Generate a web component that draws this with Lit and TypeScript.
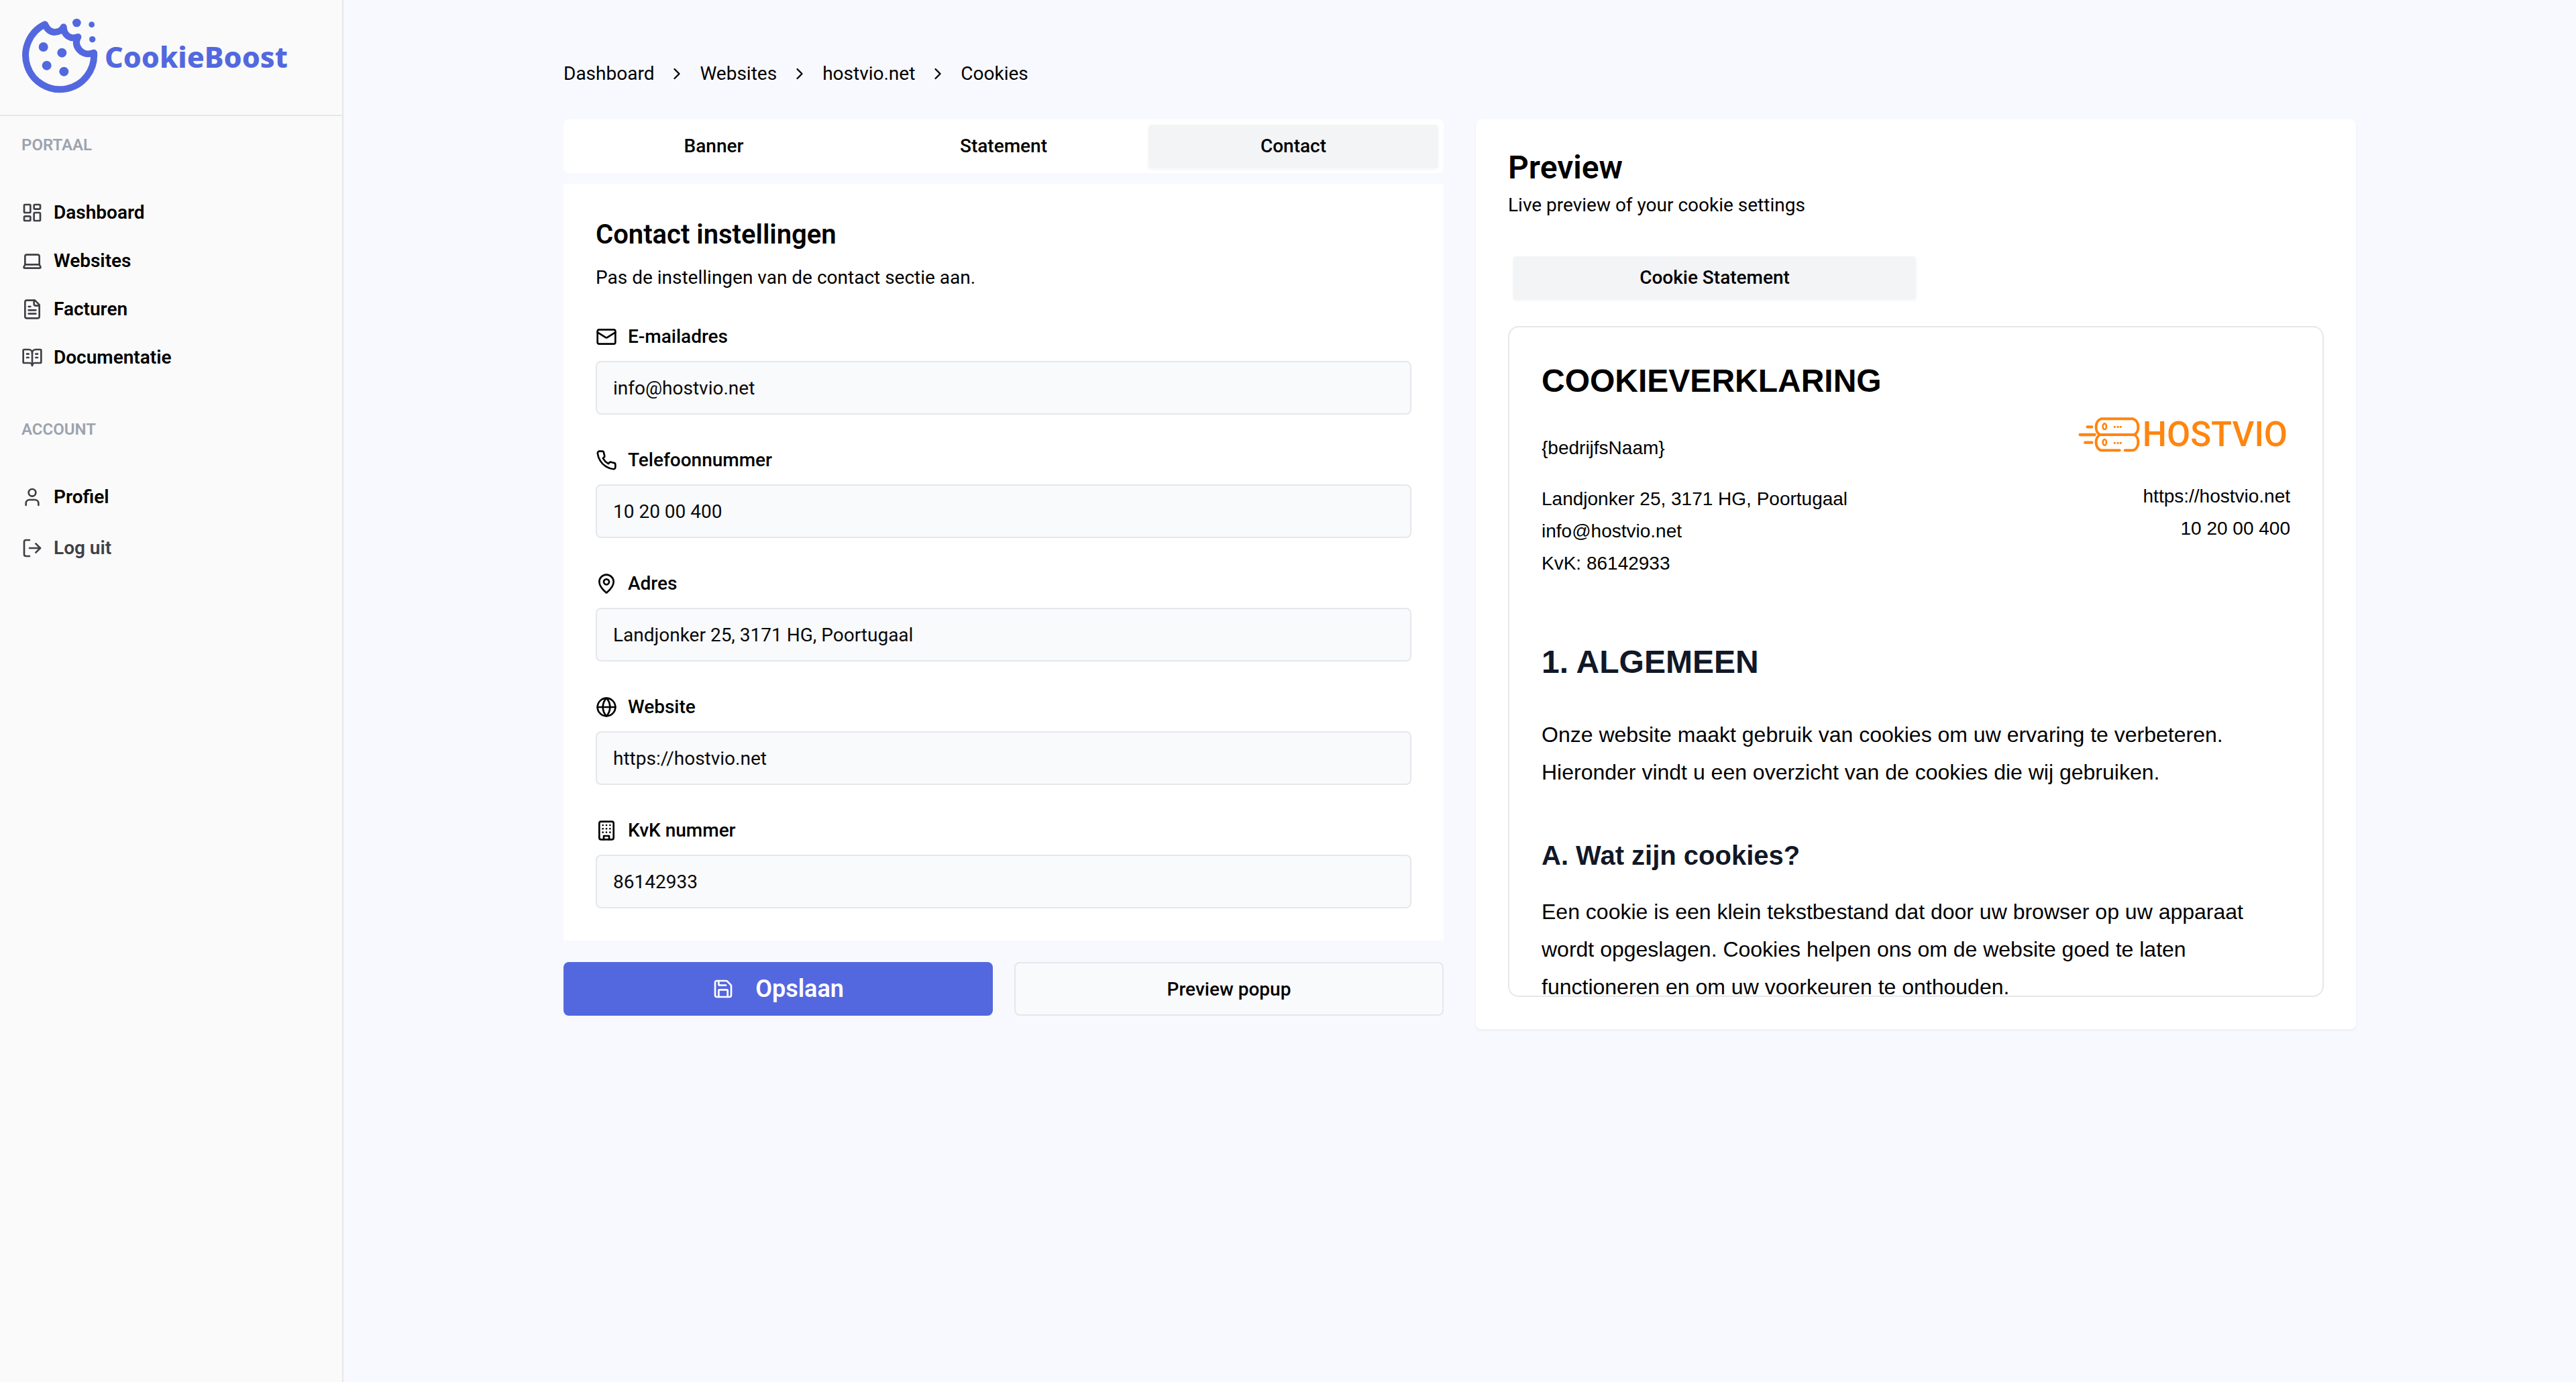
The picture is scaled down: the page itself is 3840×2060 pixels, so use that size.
import { LitElement, html, css, svg, type SVGTemplateResult } from "lit";
import { customElement, property, state } from "lit/decorators.js";
import { classMap } from "lit/directives/class-map.js";

const ICONS: Record<string, SVGTemplateResult> = {
  dashboard: svg`<rect width="7" height="9" x="3" y="3" rx="1"/><rect width="7" height="5" x="14" y="3" rx="1"/><rect width="7" height="9" x="14" y="12" rx="1"/><rect width="7" height="5" x="3" y="16" rx="1"/>`,
  laptop: svg`<path d="M20 16V7a2 2 0 0 0-2-2H6a2 2 0 0 0-2 2v9m16 0H4m16 0 1.28 2.55a1 1 0 0 1-.9 1.45H3.62a1 1 0 0 1-.9-1.45L4 16"/>`,
  file: svg`<path d="M15 2H6a2 2 0 0 0-2 2v16a2 2 0 0 0 2 2h12a2 2 0 0 0 2-2V7Z"/><path d="M14 2v4a2 2 0 0 0 2 2h4"/><path d="M10 9H8"/><path d="M16 13H8"/><path d="M16 17H8"/>`,
  book: svg`<path d="M12 7v14"/><path d="M16 12h2"/><path d="M16 8h2"/><path d="M3 18a1 1 0 0 1-1-1V4a1 1 0 0 1 1-1h5a4 4 0 0 1 4 4 4 4 0 0 1 4-4h5a1 1 0 0 1 1 1v13a1 1 0 0 1-1 1h-6a3 3 0 0 0-3 3 3 3 0 0 0-3-3z"/><path d="M6 12h2"/><path d="M6 8h2"/>`,
  user: svg`<path d="M19 21v-2a4 4 0 0 0-4-4H9a4 4 0 0 0-4 4v2"/><circle cx="12" cy="7" r="4"/>`,
  logout: svg`<path d="M9 21H5a2 2 0 0 1-2-2V5a2 2 0 0 1 2-2h4"/><path d="m16 17 5-5-5-5"/><path d="M21 12H9"/>`,
  chevron: svg`<path d="m9 18 6-6-6-6"/>`,
  mail: svg`<rect width="20" height="16" x="2" y="4" rx="2"/><path d="m22 7-8.97 5.7a1.94 1.94 0 0 1-2.06 0L2 7"/>`,
  phone: svg`<path d="M22 16.92v3a2 2 0 0 1-2.18 2 19.79 19.79 0 0 1-8.63-3.07 19.5 19.5 0 0 1-6-6 19.79 19.79 0 0 1-3.07-8.67A2 2 0 0 1 4.11 2h3a2 2 0 0 1 2 1.72 12.84 12.84 0 0 0 .7 2.81 2 2 0 0 1-.45 2.11L8.09 9.91a16 16 0 0 0 6 6l1.27-1.27a2 2 0 0 1 2.11-.45 12.84 12.84 0 0 0 2.81.7A2 2 0 0 1 22 16.92z"/>`,
  pin: svg`<path d="M20 10c0 4.993-5.539 10.193-7.399 11.799a1 1 0 0 1-1.202 0C9.539 20.193 4 14.993 4 10a8 8 0 0 1 16 0"/><circle cx="12" cy="10" r="3"/>`,
  globe: svg`<circle cx="12" cy="12" r="10"/><path d="M12 2a14.5 14.5 0 0 0 0 20 14.5 14.5 0 0 0 0-20"/><path d="M2 12h20"/>`,
  building: svg`<rect width="16" height="20" x="4" y="2" rx="2"/><path d="M9 22v-4h6v4"/><path d="M8 6h.01"/><path d="M16 6h.01"/><path d="M12 6h.01"/><path d="M12 10h.01"/><path d="M12 14h.01"/><path d="M16 10h.01"/><path d="M16 14h.01"/><path d="M8 10h.01"/><path d="M8 14h.01"/>`,
  save: svg`<path d="M15.2 3a2 2 0 0 1 1.4.6l3.8 3.8a2 2 0 0 1 .6 1.4V19a2 2 0 0 1-2 2H5a2 2 0 0 1-2-2V5a2 2 0 0 1 2-2z"/><path d="M17 21v-7a1 1 0 0 0-1-1H8a1 1 0 0 0-1 1v7"/><path d="M7 3v4a1 1 0 0 0 1 1h7"/>`,
};

@customElement("line-icon")
export class LineIcon extends LitElement {
  static styles = css`
    :host {
      display: block;
      flex: none;
      width: 32px;
      height: 32px;
    }
    .glyph {
      display: block;
      width: 100%;
      height: 100%;
      fill: none;
      stroke: currentColor;
      stroke-width: 2;
      stroke-linecap: round;
      stroke-linejoin: round;
    }
  `;

  @property() name = "";

  render() {
    return html`<svg class="glyph" viewBox="0 0 24 24" aria-hidden="true">${ICONS[this.name]}</svg>`;
  }
}

interface NavItem {
  icon: string;
  label: string;
}

const PORTAL: NavItem[] = [
  { icon: "dashboard", label: "Dashboard" },
  { icon: "laptop", label: "Websites" },
  { icon: "file", label: "Facturen" },
  { icon: "book", label: "Documentatie" },
];

@customElement("side-bar")
export class SideBar extends LitElement {
  static styles = css`
    :host {
      display: flex;
      flex-direction: column;
      box-sizing: border-box;
      width: 512px;
      flex: none;
      background: #fafafa;
      border-right: 2px solid #e5e7eb;
    }
    .brand {
      display: flex;
      align-items: center;
      gap: 10px;
      box-sizing: border-box;
      height: 173px;
      padding: 0 32px 6px;
      border-bottom: 2px solid #e5e7eb;
      color: #5368df;
      text-decoration: none;
    }
    .cookie {
      display: block;
      width: 114px;
      height: 112px;
    }
    .wordmark {
      font: 800 43px/48px "Noto Sans", sans-serif;
      padding-top: 4px;
    }
    .nav {
      display: flex;
      flex-direction: column;
      padding: 27px 32px 0;
    }
    .heading {
      margin: 0 0 49px;
      font-size: 24px;
      line-height: 32px;
      font-weight: 600;
      color: #9ca3af;
    }
    .list {
      list-style: none;
      margin: 0 0 55px;
      padding: 0;
    }
    .link {
      display: flex;
      align-items: center;
      gap: 16px;
      width: 100%;
      padding: 16px 0;
      border: 0;
      background: none;
      font: inherit;
      font-size: 28px;
      line-height: 40px;
      font-weight: 600;
      color: #000;
      text-align: left;
      text-decoration: none;
      cursor: pointer;
    }
    .link line-icon {
      color: #3f3f46;
    }
    .leave {
      padding: 20px 0;
      color: #3f3f46;
    }
  `;

  render() {
    return html`
      <a class="brand" href="#">
        <svg class="cookie" viewBox="98 79 342 336" aria-hidden="true">
          <path d="M203 107A153 153 0 1 0 422 234C400 243 375 240 358 222C342 205 339 185 351 163C318 176 288 158 286 119C280 133 263 142 246 142C228 142 213 130 203 107Z" fill="none" stroke="currentColor" stroke-width="30" stroke-linejoin="round"/>
          <g fill="currentColor">
            <circle cx="196" cy="208" r="21"/><circle cx="279" cy="234" r="21"/>
            <circle cx="211" cy="291" r="21"/><circle cx="288" cy="318" r="21"/>
            <circle cx="345" cy="100" r="19"/><circle cx="412" cy="108" r="13"/><circle cx="415" cy="174" r="14"/>
          </g>
        </svg>
        <span class="wordmark">CookieBoost</span>
      </a>
      <nav class="nav">
        <h2 class="heading">PORTAAL</h2>
        <ul class="list">
          ${PORTAL.map(
            (item) => html`<li>
              <a class="link" href="#"><line-icon name=${item.icon}></line-icon>${item.label}</a>
            </li>`,
          )}
        </ul>
        <h2 class="heading">ACCOUNT</h2>
        <ul class="list">
          <li><a class="link" href="#"><line-icon name="user"></line-icon>Profiel</a></li>
          <li><button class="link leave" type="button"><line-icon name="logout"></line-icon>Log uit</button></li>
        </ul>
      </nav>
    `;
  }
}

interface Field {
  id: string;
  icon: string;
  label: string;
  type: string;
}

const FIELDS: Field[] = [
  { id: "email", icon: "mail", label: "E-mailadres", type: "email" },
  { id: "phone", icon: "phone", label: "Telefoonnummer", type: "tel" },
  { id: "address", icon: "pin", label: "Adres", type: "text" },
  { id: "website", icon: "globe", label: "Website", type: "url" },
  { id: "kvk", icon: "building", label: "KvK nummer", type: "text" },
];

export type Contact = Record<string, string>;

const tabStyles = css`
  .tab {
    box-sizing: border-box;
    height: 64px;
    padding: 0 24px;
    border: 0;
    border-radius: 4px;
    background: none;
    color: #000;
    font: inherit;
    font-size: 28px;
    line-height: 40px;
    font-weight: 500;
    cursor: pointer;
  }
  .active {
    background: #f3f4f6;
    box-shadow: 0 2px 4px rgb(0 0 0 / 0.05);
  }
`;

@customElement("contact-form")
export class ContactForm extends LitElement {
  static styles = [
    tabStyles,
    css`
      :host {
        display: block;
        min-width: 0;
      }
      .tabs {
        display: grid;
        grid-template-columns: repeat(3, 1fr);
        padding: 8px;
        border-radius: 8px;
        background: #fff;
      }
      .card {
        margin-top: 16px;
        padding: 48px;
        background: #fff;
      }
      .title {
        margin: 0 0 16px;
        font-size: 40px;
        line-height: 56px;
        font-weight: 600;
      }
      .lead {
        margin: 0 0 48px;
        font-size: 28px;
        line-height: 40px;
      }
      .fields {
        display: flex;
        flex-direction: column;
        gap: 48px;
      }
      .label {
        display: flex;
        align-items: center;
        gap: 16px;
        margin-bottom: 16px;
        font-size: 28px;
        line-height: 40px;
        font-weight: 500;
      }
      .input {
        display: block;
        box-sizing: border-box;
        width: 100%;
        height: 80px;
        padding: 0 24px;
        border: 2px solid #e5e7eb;
        border-radius: 8px;
        background: #f9fafb;
        color: #09090b;
        font: inherit;
        font-size: 28px;
        outline: none;
      }
      .actions {
        display: grid;
        grid-template-columns: 1fr 1fr;
        gap: 32px;
        margin-top: 32px;
      }
      .button {
        display: flex;
        align-items: center;
        justify-content: center;
        gap: 32px;
        box-sizing: border-box;
        height: 80px;
        border: 2px solid #e5e7eb;
        border-radius: 8px;
        background: #f9fafb;
        color: #000;
        font: inherit;
        font-size: 28px;
        font-weight: 500;
        cursor: pointer;
      }
      .primary {
        border-color: #5368df;
        background: #5368df;
        color: #fff;
        font-size: 36px;
        font-weight: 600;
      }
    `,
  ];

  @property({ attribute: false }) contact: Contact = {};
  @state() private tab = "Contact";

  private edit(id: string, event: Event) {
    const value = (event.target as HTMLInputElement).value;
    this.dispatchEvent(new CustomEvent("contact-change", { detail: { id, value } }));
  }

  render() {
    return html`
      <div class="tabs" role="tablist">
        ${["Banner", "Statement", "Contact"].map(
          (name) => html`<button
            type="button"
            role="tab"
            aria-selected=${this.tab === name}
            class=${classMap({ tab: true, active: this.tab === name })}
            @click=${() => (this.tab = name)}
          >${name}</button>`,
        )}
      </div>
      <form @submit=${(e: Event) => e.preventDefault()}>
        <section class="card">
          <h2 class="title">Contact instellingen</h2>
          <p class="lead">Pas de instellingen van de contact sectie aan.</p>
          <div class="fields">
            ${FIELDS.map(
              (f) => html`<div>
                <label class="label" for=${f.id}><line-icon name=${f.icon}></line-icon>${f.label}</label>
                <input
                  class="input"
                  id=${f.id}
                  type=${f.type}
                  .value=${this.contact[f.id] ?? ""}
                  @input=${(e: Event) => this.edit(f.id, e)}
                />
              </div>`,
            )}
          </div>
        </section>
        <div class="actions">
          <button class="button primary" type="submit"><line-icon name="save"></line-icon>Opslaan</button>
          <button class="button" type="button">Preview popup</button>
        </div>
      </form>
    `;
  }
}

@customElement("statement-preview")
export class StatementPreview extends LitElement {
  static styles = [
    tabStyles,
    css`
      :host {
        display: block;
        box-sizing: border-box;
        min-width: 0;
        padding: 48px;
        border-radius: 8px;
        background: #fff;
        box-shadow: 0 2px 4px rgb(0 0 0 / 0.05);
      }
      .title {
        margin: 0 0 12px;
        font-size: 48px;
        line-height: 48px;
        font-weight: 600;
      }
      .lead {
        margin: 0 0 48px;
        font-size: 28px;
        line-height: 40px;
      }
      .tabs {
        display: grid;
        grid-template-columns: 1fr 1fr;
        padding: 8px;
        margin-bottom: 32px;
      }
      .document {
        box-sizing: border-box;
        height: 1000px;
        padding: 48px;
        overflow-y: auto;
        scrollbar-width: none;
        border: 2px solid #e5e7eb;
        border-radius: 16px;
        font-family: "Liberation Sans", Arial, sans-serif;
      }
      .name {
        margin: 0;
        font-size: 48px;
        line-height: 64px;
        font-weight: 700;
      }
      .parties {
        display: flex;
        justify-content: space-between;
        font-size: 28px;
        line-height: 48px;
      }
      .party {
        margin: 0;
      }
      .company {
        margin: 44px 0 28px;
      }
      .side {
        text-align: right;
      }
      .logo {
        display: flex;
        align-items: center;
        justify-content: flex-end;
        gap: 4px;
        height: 64px;
        margin: 16px 4px 36px 0;
        color: #ff850f;
        font-family: Roboto, sans-serif;
        font-size: 51px;
        line-height: 64px;
        font-weight: 500;
      }
      .server {
        display: block;
        width: 92px;
        height: 54px;
      }
      .chapter {
        margin: 91px 0 48px;
        font-size: 48px;
        line-height: 64px;
        font-weight: 700;
        color: #111827;
      }
      .topic {
        margin: 64px 0 24px;
        font-size: 40px;
        line-height: 64px;
        font-weight: 700;
        color: #111827;
      }
      .text {
        margin: 0;
        font-size: 32px;
        line-height: 56px;
      }
    `,
  ];

  @property({ attribute: false }) contact: Contact = {};

  render() {
    const c = this.contact;
    return html`
      <h2 class="title">Preview</h2>
      <p class="lead">Live preview of your cookie settings</p>
      <div class="tabs" role="tablist">
        <button class="tab active" type="button" role="tab" aria-selected="true">Cookie Statement</button>
      </div>
      <article class="document">
        <h1 class="name">COOKIEVERKLARING</h1>
        <div class="parties">
          <div>
            <p class="party company">{bedrijfsNaam}</p>
            <p class="party">${c.address}</p>
            <p class="party">${c.email}</p>
            <p class="party">KvK: ${c.kvk}</p>
          </div>
          <div class="side">
            <div class="logo">
              <svg class="server" viewBox="58 61 276 162" aria-hidden="true">
                <g fill="none" stroke="currentColor" stroke-width="12" stroke-linecap="round">
                  <path d="M99 107H119M66 142H132M89 177H119" stroke-width="13"/>
                  <path d="M160 71H303C333 80 333 132 308 142H156C131 132 131 80 160 71Z"/>
                  <path d="M243 212H160C131 204 131 152 156 142M308 142C333 152 333 204 303 212H267"/>
                  <ellipse cx="176" cy="105" rx="8" ry="13" stroke-width="8"/>
                  <ellipse cx="176" cy="176" rx="8" ry="13" stroke-width="8"/>
                </g>
                <g fill="currentColor">
                  <circle cx="221" cy="107" r="5"/><circle cx="235" cy="107" r="5"/><circle cx="248" cy="107" r="5"/>
                  <circle cx="221" cy="179" r="5"/><circle cx="235" cy="179" r="5"/><circle cx="248" cy="179" r="5"/>
                </g>
              </svg>
              <span>HOSTVIO</span>
            </div>
            <p class="party">${c.website}</p>
            <p class="party">${c.phone}</p>
          </div>
        </div>
        <h2 class="chapter">1. ALGEMEEN</h2>
        <p class="text">
          Onze website maakt gebruik van cookies om uw ervaring te verbeteren. Hieronder vindt u een overzicht van de
          cookies die wij gebruiken.
        </p>
        <h3 class="topic">A. Wat zijn cookies?</h3>
        <p class="text">
          Een cookie is een klein tekstbestand dat door uw browser op uw apparaat wordt opgeslagen. Cookies helpen ons
          om de website goed te laten functioneren en om uw voorkeuren te onthouden.
        </p>
      </article>
    `;
  }
}

@customElement("app-root")
export class AppRoot extends LitElement {
  static styles = css`
    :host {
      display: flex;
      min-height: 100vh;
      background: #f8f9fe;
      color: #000;
      font-family: Roboto, sans-serif;
    }
    .main {
      flex: 1;
      min-width: 0;
      padding: 88px 48px;
    }
    .content {
      max-width: 2672px;
      margin: 0 auto;
    }
    .crumbs {
      display: flex;
      align-items: center;
      gap: 20px;
      margin-bottom: 46px;
      font-size: 28px;
      line-height: 44px;
    }
    .crumb {
      color: inherit;
      text-decoration: none;
    }
    .separator {
      width: 28px;
      height: 28px;
    }
    .columns {
      display: grid;
      grid-template-columns: 1fr 1fr;
      align-items: start;
      gap: 48px;
    }
  `;

  @state() private contact: Contact = {
    email: "info@hostvio.net",
    phone: "10 20 00 400",
    address: "Landjonker 25, 3171 HG, Poortugaal",
    website: "https://hostvio.net",
    kvk: "86142933",
  };

  private change(event: CustomEvent<{ id: string; value: string }>) {
    this.contact = { ...this.contact, [event.detail.id]: event.detail.value };
  }

  render() {
    return html`
      <side-bar></side-bar>
      <main class="main">
        <div class="content">
          <nav class="crumbs" aria-label="Breadcrumb">
            ${["Dashboard", "Websites", "hostvio.net", "Cookies"].map(
              (name, i) => html`${i > 0 ? html`<line-icon class="separator" name="chevron"></line-icon>` : ""}
                <a class="crumb" href="#">${name}</a>`,
            )}
          </nav>
          <div class="columns">
            <contact-form .contact=${this.contact} @contact-change=${this.change}></contact-form>
            <statement-preview .contact=${this.contact}></statement-preview>
          </div>
        </div>
      </main>
    `;
  }
}
